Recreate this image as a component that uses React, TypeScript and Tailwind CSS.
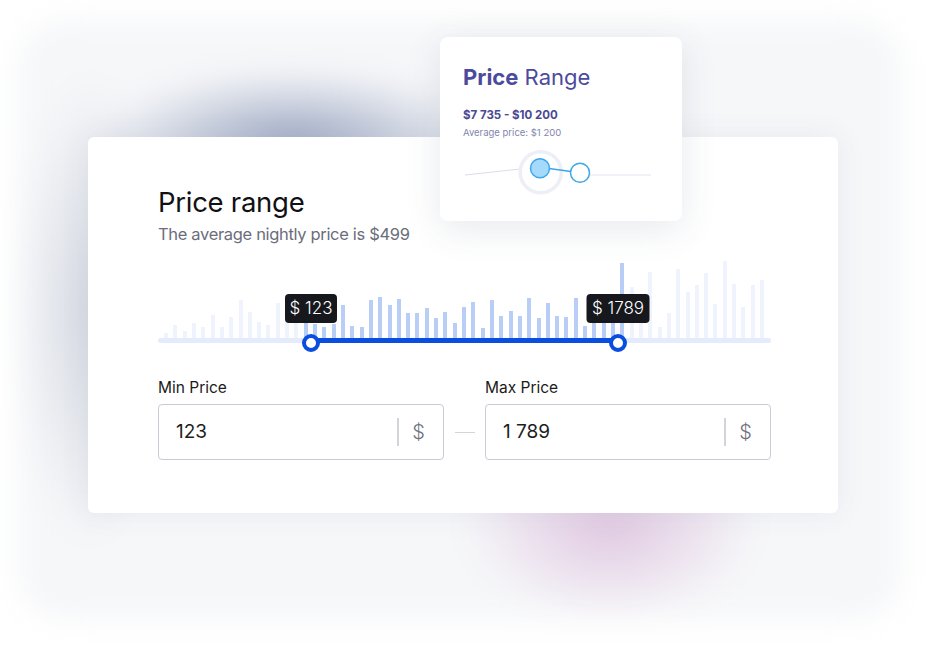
import React from "react";

// Histogram heights (px above the track), left to right.
const BARS = [
  8, 16, 10, 18, 14, 26, 14, 24, 41, 29, 19, 16, 38, 20, 22, 18, 17, 14, 17, 36, 15, 14, 41, 44, 36, 42, 28, 28,
  33, 23, 29, 18, 34, 39, 13, 41, 25, 30, 25, 43, 23, 38, 25, 24, 43, 15, 20, 20, 20, 78, 54, 30, 69, 14, 28, 72,
  49, 56, 68, 37, 80, 57, 34, 56, 61,
];
const SEL_FROM = 15;
const SEL_TO = 49;

const sans = { fontFamily: "Inter, 'Noto Sans', sans-serif" };

function Histogram() {
  return (
    <div className="relative h-[90px]">
      <div className="flex h-[81px] items-end justify-between pl-[6px] pr-[7px]">
        {BARS.map((h, i) => (
          <div
            key={i}
            className={i >= SEL_FROM && i <= SEL_TO ? "w-[4px] bg-[#b9cef6]" : "w-[4px] bg-[#eef3fd]"}
            style={{ height: h }}
          />
        ))}
      </div>
      <div className="relative -mt-[3px] h-[5px] rounded-full bg-[#e3ebfc]">
        <div className="absolute inset-y-0 left-[24.96%] right-[24.96%] bg-[#0a4ee0]" />
      </div>
      {/* thumbs */}
      <div className="absolute left-[24.96%] top-[74px] h-[18px] w-[18px] -translate-x-1/2 rounded-full border-[4px] border-[#0a4ee0] bg-white" />
      <div className="absolute left-[75.04%] top-[74px] h-[18px] w-[18px] -translate-x-1/2 rounded-full border-[4px] border-[#0a4ee0] bg-white" />
      {/* value tooltips */}
      <div className="absolute left-[24.96%] top-[34px] flex h-[29px] w-[52px] -translate-x-1/2 items-center justify-center rounded-[4px] bg-[#16181d] text-[17px] font-light text-white">
        $ 123
      </div>
      <div className="absolute left-[75.04%] top-[34px] flex h-[29px] w-[63px] -translate-x-1/2 items-center justify-center rounded-[4px] bg-[#16181d] text-[17px] font-light text-white">
        $ 1789
      </div>
    </div>
  );
}

function PriceInput({ label, value }: { label: string; value: string }) {
  return (
    <div className="w-[286px]">
      <div className="mb-[6px] text-[15.5px] leading-[20px] text-[#1b1b20]">{label}</div>
      <div className="flex h-[56px] items-center rounded-[4px] border border-[#c9cad6] pl-[17px] pr-[18px]">
        <span className="flex-1 text-[19px] text-[#1d1d22]">{value}</span>
        <span className="h-[28px] w-[2px] bg-[#d2d3db]" />
        <span className="ml-[13px] text-[20px] font-light text-[#6e7080]">$</span>
      </div>
    </div>
  );
}

function MiniCard() {
  return (
    <div className="absolute left-[440px] top-[37px] h-[184px] w-[242px] rounded-[8px] bg-white shadow-[0_8px_36px_rgba(60,70,110,0.12)]">
      <div className="px-[23px] pt-[27px]">
        <div className="text-[22px] leading-[26px] text-[#4b4b9d]">
          <span className="font-bold">Price</span> <span className="font-normal">Range</span>
        </div>
        <div className="mt-[17px] text-[11.5px] font-bold leading-[16px] text-[#4a4a92]">$7 735 - $10 200</div>
        <div className="mt-[3px] text-[9.5px] leading-[13px] text-[#8385ae]">Average price: $1 200</div>
      </div>
      <svg width="242" height="56" viewBox="0 0 242 56" className="mt-[5px] block">
        <line x1="25" y1="31" x2="80" y2="25" stroke="#dcdcea" strokeWidth="1" />
        <line x1="150" y1="31" x2="211" y2="31" stroke="#e2e2ee" strokeWidth="1" />
        <circle cx="100.7" cy="28.3" r="20.5" fill="white" stroke="#eeeef6" strokeWidth="3.5" />
        <line x1="109" y1="24.5" x2="131" y2="27.5" stroke="#3ca7ea" strokeWidth="1.5" />
        <circle cx="100" cy="24.3" r="9.5" fill="#a6dafc" stroke="#3ca7ea" strokeWidth="1.5" />
        <circle cx="140" cy="28.7" r="9.5" fill="white" stroke="#3ca7ea" strokeWidth="1.5" />
      </svg>
    </div>
  );
}

export default function App() {
  return (
    <div className="relative h-[650px] w-[926px] overflow-hidden bg-white" style={sans}>
      {/* soft backdrop with coloured glows */}
      <div className="absolute left-[18px] top-[20px] h-[600px] w-[884px] rounded-[50px] bg-[#f6f7f9] bg-[image:radial-gradient(200px_72px_at_275px_120px,rgba(150,162,190,0.9),transparent),radial-gradient(75px_240px_at_72px_290px,rgba(190,196,210,0.6),transparent),radial-gradient(150px_95px_at_592px_505px,rgba(205,160,205,0.55),transparent)] blur-[14px]" />

      <div className="relative pl-[88px] pt-[137px]">
        <div className="h-[376px] w-[750px] rounded-[6px] bg-white pl-[70px] pr-[67px] pt-[47px] shadow-[0_0_30px_rgba(70,80,110,0.08)]">
          <div className="text-[27.5px] leading-[36px] tracking-[-0.01em] text-[#111114]">Price range</div>
          <div className="mt-[2px] text-[16.5px] leading-[24px] tracking-[-0.02em] text-[#6b6d7b]">
            The average nightly price is $499
          </div>
          <div className="mt-[14px]">
            <Histogram />
          </div>
          <div className="mt-[28px] flex items-end">
            <PriceInput label="Min Price" value="123" />
            <div className="flex h-[56px] w-[41px] items-center justify-center">
              <span className="h-px w-[20px] bg-[#d3d4dc]" />
            </div>
            <PriceInput label="Max Price" value="1 789" />
          </div>
        </div>
      </div>

      <MiniCard />
    </div>
  );
}
